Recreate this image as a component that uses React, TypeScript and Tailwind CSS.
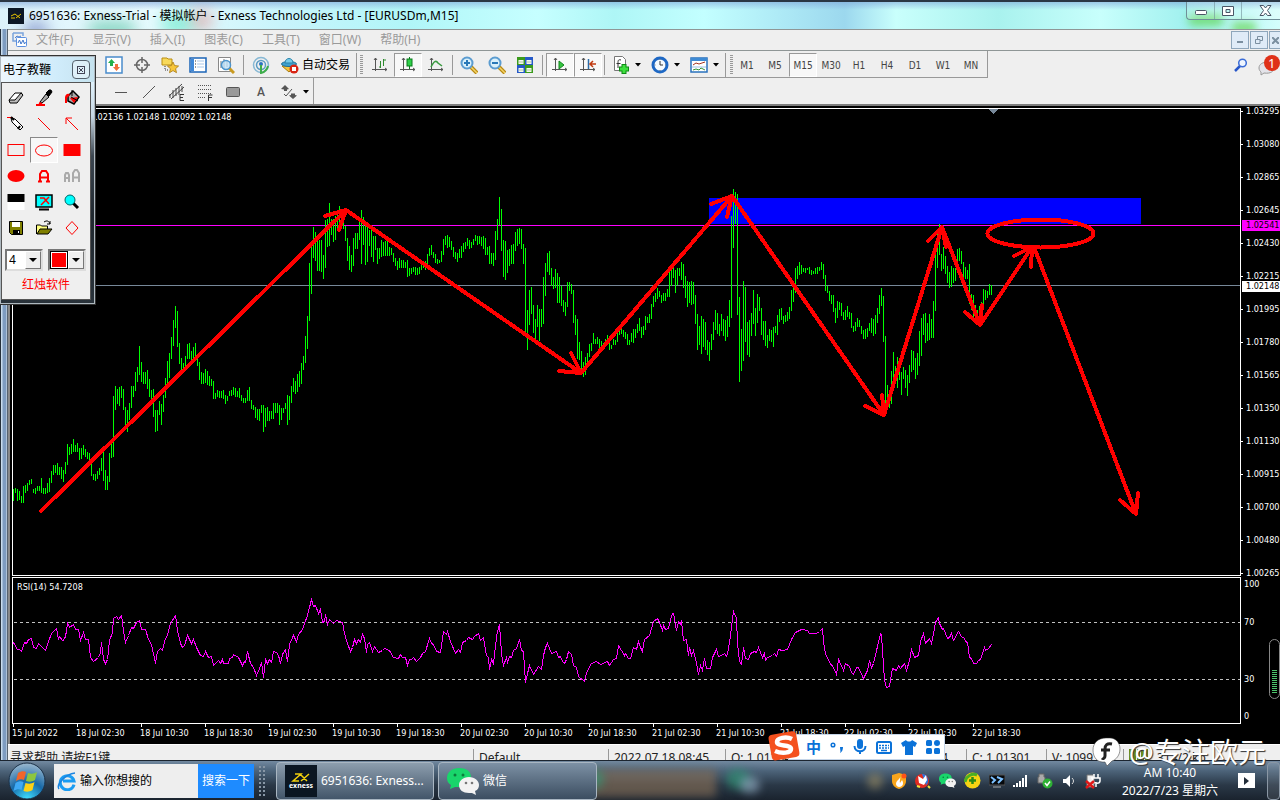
import type { ReactNode } from 'react';

/** high/low of every M15 bar, one bar each 2px starting at x=13 */
const bars = `489-501 488-493 489-501 491-500 496-503 486-503 485-493 483-491 480-485 479-484 489-493 488-494 486-491 486-491 478-493 488-494 488-494 483-493 478-492 471-483
465-475 465-473 463-475 467-475 467-479 470-482 462-474 444-465 447-455 444-454 439-452 445-452 443-452 448-460 448-459 445-455 449-457 452-459 453-465 464-476
474-480 474-481 471-479 468-475 458-471 450-481 470-490 476-490 453-482 444-458 396-457 386-410 389-404 387-406 386-398 389-410 407-425 410-432 403-420 386-408
386-397 372-391 367-382 346-375 362-382 372-384 372-384 370-389 379-397 390-401 389-417 410-432 410-431 401-415 404-425 395-412 378-398 361-386 353-378 337-359
320-346 306-328 311-347 343-364 358-370 363-371 356-371 344-359 343-359 351-362 347-358 343-360 356-366 362-380 372-384 373-384 369-383 371-385 376-386 379-386
381-399 393-399 390-397 391-398 391-398 390-399 395-404 396-401 391-396 390-396 387-395 388-397 391-397 388-398 395-401 398-403 398-403 390-401 387-401 400-409
405-410 407-418 409-420 409-421 405-413 405-432 408-427 407-421 411-421 411-419 403-419 403-413 403-413 405-425 408-420 408-413 403-409 395-425 396-420 386-403
378-392 381-394 374-392 371-387 363-384 356-370 336-363 316-349 263-321 244-294 227-258 232-261 240-271 240-271 240-272 255-279 220-268 219-247 203-246 219-235
219-242 216-240 213-230 206-227 210-223 212-229 226-241 238-261 246-270 255-272 238-266 233-249 233-249 222-240 210-264 217-245 225-265 227-262 230-246 229-257
236-262 236-250 248-264 248-259 240-257 242-256 241-256 241-256 247-256 248-255 253-262 258-266 261-270 258-268 260-268 260-268 262-268 260-277 268-276 268-274
267-272 267-275 268-275 267-274 264-270 264-268 261-270 254-265 248-256 245-255 252-258 254-263 259-264 260-263 251-262 239-255 236-245 235-248 237-247 241-250
247-257 252-259 253-262 249-258 246-258 243-252 242-249 238-246 240-249 242-248 239-245 235-241 236-245 236-244 237-246 236-249 238-255 247-255 246-264 253-264
253-266 231-260 219-240 197-225 209-251 240-277 241-280 250-273 249-266 245-264 244-264 232-251 229-246 228-244 229-249 244-264 248-332 310-350 290-325 287-314
305-333 319-339 305-327 309-341 309-327 277-324 263-296 253-272 251-275 268-286 277-289 269-288 273-303 277-303 286-306 300-312 302-316 282-307 282-291 284-294
290-323 315-335 319-359 342-360 351-371 362-377 357-375 353-363 344-357 343-351 333-344 339-344 337-344 339-349 341-350 343-350 339-347 335-345 340-350 345-349
339-345 340-345 333-342 328-335 327-334 330-337 332-339 334-345 340-345 333-342 329-343 329-338 324-333 318-331 327-338 326-335 316-330 317-323 314-323 304-319
296-307 293-302 288-299 291-297 295-303 293-301 293-301 289-297 270-297 270-286 266-278 270-293 268-285 268-276 262-280 264-288 276-298 281-307 282-303 281-305
282-304 295-324 314-350 326-345 316-354 319-347 322-350 340-355 342-361 334-350 322-340 310-330 313-334 324-336 314-331 319-336 320-341 316-337 300-327 216-318
189-248 192-224 194-315 297-382 329-371 281-361 287-342 322-355 320-357 313-336 290-324 308-336 294-323 297-311 308-335 321-340 321-346 335-348 329-341 330-342
327-347 326-333 315-335 309-322 308-320 316-324 315-322 312-321 307-319 290-311 282-302 268-293 266-279 262-275 265-274 268-272 268-273 268-270 267-274 270-275
271-274 268-274 267-274 267-271 262-270 264-279 275-291 286-293 291-301 295-304 295-312 308-323 301-318 302-310 303-316 312-320 310-320 306-317 312-319 313-328
326-332 322-331 318-327 320-327 326-334 330-339 329-339 328-337 323-331 318-333 319-336 315-334 308-323 295-314 288-306 296-342 336-407 385-410 390-408 371-404
352-378 366-378 357-388 362-380 372-395 367-379 370-388 375-396 365-383 350-372 351-370 358-379 353-375 331-366 318-356 314-335 313-343 323-341 314-340 319-338
301-338 255-311 233-268 224-255 254-271 247-269 256-274 266-283 272-288 266-287 268-283 268-281 249-270 248-261 251-264 262-280 267-279 270-279 264-304 294-310
295-317 305-317 310-318 306-315 302-313 289-307 290-300 291-298 284-295 285-295`
  .split(/\s+/)
  .map((b) => b.split('-').map(Number));

const barPath = bars.map(([hi, lo], i) => `M${13 + i * 2} ${hi}h1V${lo}h-1z`).join('');

const rsi =
  '13,642 17,649 19,649 21,651 24,642 26,643 28,639 31,638 33,647 36,648 38,643 41,646 45,650 48,641 51,633 53,631 56,628 58,639 59,636 62,640 64,639 66,631 67,622 69,627 73,624 75,629 78,629 80,640 83,632 85,639 88,639 90,657 93,661 98,657 100,652 101,642 103,659 105,663 107,659 109,640 112,632 113,618 116,616 118,619 121,615 123,630 125,642 128,635 131,627 133,628 136,622 139,620 141,629 145,629 148,639 151,644 155,663 157,651 160,648 162,650 165,638 167,635 170,623 175,615 177,630 180,643 182,647 184,645 187,635 191,643 193,639 196,647 200,655 203,656 205,651 208,657 211,656 213,665 218,660 220,663 222,659 223,663 228,663 229,658 232,657 233,654 238,657 242,665 244,661 245,662 247,651 250,663 253,667 256,675 259,668 261,662 263,677 265,659 267,663 269,659 271,662 273,651 276,652 278,655 280,663 282,654 285,649 287,661 289,644 293,635 296,641 298,634 302,629 304,623 307,615 309,607 311,599 313,606 315,605 318,613 320,609 322,622 324,621 325,614 327,624 329,619 333,623 336,620 342,622 344,633 347,643 350,651 352,647 354,639 356,643 358,639 360,642 362,634 364,638 366,652 367,644 369,642 372,651 374,646 378,652 382,650 384,648 389,650 393,657 398,658 400,654 402,657 405,657 407,665 409,659 411,659 413,657 416,661 420,657 422,653 425,651 429,638 431,643 433,644 436,651 440,652 443,631 446,634 447,631 450,641 455,653 458,649 460,652 462,642 466,640 468,637 472,639 474,636 478,633 480,640 483,637 486,655 488,657 489,669 491,659 493,663 496,637 497,631 499,624 501,653 503,665 506,657 507,662 509,656 511,657 513,650 516,648 519,639 521,650 523,651 525,682 527,673 529,665 533,674 538,666 541,669 543,655 545,647 547,643 551,653 556,651 558,657 560,656 562,661 564,663 566,659 568,651 571,654 573,665 576,667 578,676 584,681 586,673 588,668 591,663 596,661 600,664 607,661 609,665 613,659 616,658 618,645 621,650 624,655 625,653 628,658 630,658 633,647 636,649 638,641 640,647 642,651 644,639 649,635 653,621 657,618 659,622 662,630 663,625 665,629 668,628 670,619 672,613 673,613 676,630 678,621 680,624 681,620 683,640 686,639 688,655 689,647 691,655 693,650 696,663 698,674 700,665 702,670 704,658 706,668 710,668 712,657 716,649 718,656 721,655 724,653 726,656 727,653 729,642 731,627 732,618 733,611 736,618 737,643 739,661 741,664 743,647 745,658 748,659 750,653 754,651 756,652 758,647 762,657 764,653 765,660 767,657 772,655 774,653 776,656 778,649 782,650 787,649 791,639 795,632 801,629 807,630 809,633 816,633 819,631 822,628 823,641 825,653 829,662 833,667 836,674 838,659 839,661 843,670 845,663 849,666 851,672 853,674 856,667 858,667 863,678 867,670 869,660 871,667 873,663 876,650 877,646 880,633 881,634 882,650 884,680 886,687 889,686 892,668 896,670 898,665 900,668 904,663 906,670 909,660 911,649 914,657 918,655 920,641 923,633 925,643 929,638 931,643 933,633 935,622 938,617 939,623 942,629 943,628 947,638 949,637 951,633 953,640 958,631 961,636 964,638 965,641 967,642 969,657 971,658 973,663 976,663 978,660 980,659 984,647 985,650 988,648 991,644';

/** hand drawn arrows: shaft, then the two strokes of the head */
const arrows = [
  'M41 511L346 210M325 216L346 210L339 230',
  'M346 210L581 373M559 371L581 373L571 353',
  'M581 373L732 196M711 204L732 196L727 217',
  'M732 196L884 415M865 406L884 415L882 395',
  'M884 415L942 227M928 241L942 227L946 247',
  'M942 227L980 325M965 312L980 325L982 305',
  'M980 325L1032 247M1014 256L1032 247L1031 267',
  'M1034 247L1136 514M1120 500L1136 514L1138 493',
];

const prices = [
  '1.03295', '1.03080', '1.02865', '1.02645', '1.02430', '1.02215', '1.01995', '1.01780',
  '1.01565', '1.01350', '1.01130', '1.00915', '1.00700', '1.00480', '1.00265',
];

const times = [
  '15 Jul 2022', '18 Jul 02:30', '18 Jul 10:30', '18 Jul 18:30', '19 Jul 02:30', '19 Jul 10:30', '19 Jul 18:30', '20 Jul 02:30',
  '20 Jul 10:30', '20 Jul 18:30', '21 Jul 02:30', '21 Jul 10:30', '21 Jul 18:30', '22 Jul 02:30', '22 Jul 10:30', '22 Jul 18:30',
];

const menus = ['文件(F)', '显示(V)', '插入(I)', '图表(C)', '工具(T)', '窗口(W)', '帮助(H)'];
const frames = ['M1', 'M5', 'M15', 'M30', 'H1', 'H4', 'D1', 'W1', 'MN'];

const uiFont = "font-['Noto_Sans','Noto_Sans_CJK_SC',sans-serif]";
const tahoma = "font-['DejaVu_Sans_Condensed','DejaVu_Sans',sans-serif]";

function Svg({ size = 18, children }: { size?: number; children: ReactNode }) {
  return (
    <svg width={size} height={size} viewBox="0 0 18 18" fill="none" aria-hidden="true" className="shrink-0">
      {children}
    </svg>
  );
}

function Tool({ label, pressed, children }: { label: string; pressed?: boolean; children: ReactNode }) {
  return (
    <button
      type="button"
      aria-label={label}
      className={`grid h-6 w-7 shrink-0 place-items-center ${
        pressed ? 'border-t border-l border-t-[#999] border-l-[#999] border-r border-b border-r-white border-b-white bg-[#f8f8f8]' : ''
      }`}
    >
      {children}
    </button>
  );
}

const Caret = () => (
  <svg width="6" height="4" viewBox="0 0 6 4" className="shrink-0" aria-hidden="true">
    <path d="M0 0h6L3 3.5z" fill="#000" />
  </svg>
);

const Sep = ({ wide }: { wide?: boolean }) => (
  <span className={`h-5 w-px shrink-0 bg-[#999] ${wide ? 'mx-[3px]' : 'mx-0.5'}`} />
);

const Grip = () => (
  <span className="h-5 w-[3px] shrink-0 bg-[repeating-linear-gradient(#999_0_1px,#efefef_1px_2px)]" />
);

const Axes = () => <path d="M4.500 2v13M1 13.500h15M3 4l1.500-2L6 4M14 12l2 1.500-2 1.500" stroke="#555" />;

const Lens = ({ minus }: { minus?: boolean }) => (
  <Svg>
    <path d="M11 11l6 6" stroke="#b98a12" strokeWidth="4" />
    <path d="M11 11l6 6" stroke="#f4d469" strokeWidth="1.500" />
    <circle cx="7" cy="7" r="5.500" fill="#d9f0fb" stroke="#5b9cd0" strokeWidth="2" />
    <path d={minus ? 'M4 7h6' : 'M4 7h6M7 4v6'} stroke="#2878b8" strokeWidth="2" />
  </Svg>
);

function TitleBar() {
  return (
    <header className="relative flex h-[29px] shrink-0 items-center overflow-hidden border-t-2 border-[#2a3644] bg-[linear-gradient(90deg,#dcf3fb_0%,#e9fbff_12%,#c8f4fb_22%,#b0f6f8_32%,#c6ffff_42%,#aef6f6_48%,#c3ffff_55%,#9cd8ee_66%,#c9fffc_70%,#a9f2ee_78%,#c8fffc_86%,#9ff0ee_93%,#d4fffc_100%)]">
      <span className="absolute inset-x-0 top-0 h-2 bg-linear-to-b from-[#7fa5d8]/60 to-transparent" />
      <span className="absolute top-5 left-6 h-5 w-6 rounded-full bg-[#5560b0]/60 blur-sm" />
      <span className="absolute top-5 left-22 h-4 w-12 rounded-full bg-[#35b890]/60 blur-sm" />
      <span className="absolute top-3 left-40 h-5 w-9 rounded-full bg-[#5fe8c8]/70 blur-sm" />
      <span className="absolute top-2 left-48 h-5 w-5 rounded-full bg-[#e88080]/60 blur-sm" />
      <span className="absolute top-3 right-14 h-3 w-9 rounded-full bg-[#6fdc70]/90 blur-xs" />
      <span className="absolute top-5 right-6 h-3 w-6 rounded bg-[#7fe080] blur-xs" />
      <span className="relative ml-2 grid h-4 w-4 place-items-center bg-[#0c1826]">
        <svg width="12" height="6" viewBox="0 0 12 6" fill="none" aria-hidden="true">
          <path d="M1 5h4M1 3l4-2M5 1l5 4M6 5l5-4" stroke="#e8c400" />
        </svg>
      </span>
      <h1 className="relative ml-[5px] text-[12px] whitespace-nowrap text-black">
        6951636: Exness-Trial - 模拟帐户 - Exness Technologies Ltd - [EURUSDm,M15]
      </h1>
      <div className="relative ml-auto flex h-[18px] self-start rounded-bl border-b border-l border-[#6f8f98] bg-white/20">
        <button type="button" aria-label="最小化" className="grid w-7 place-items-center border-r border-[#6f8f98]/60 pt-1">
          <svg width="12" height="5" viewBox="0 0 12 5" aria-hidden="true"><rect x=".5" y=".5" width="11" height="4" rx="1" fill="#fff" stroke="#4a5566" /></svg>
        </button>
        <button type="button" aria-label="还原" className="grid w-[27px] place-items-center border-r border-[#6f8f98]/60">
          <svg width="12" height="10" viewBox="0 0 12 10" aria-hidden="true">
            <path d="M.5.5h11v9H.500zM4 3.500h4v3H4z" fill="#fff" stroke="#4a5566" fillRule="evenodd" />
          </svg>
        </button>
        <button type="button" aria-label="关闭" className="grid w-[38px] place-items-center pl-2">
          <svg width="13" height="11" viewBox="0 0 13 11" aria-hidden="true">
            <path d="M1 .500h3.500L6.500 3l2-2.500H12L8.500 5.500l3.500 5H8.500l-2-2.500-2 2.500H1l3.500-5z" fill="#fff" stroke="#4a5566" />
          </svg>
        </button>
      </div>
    </header>
  );
}

function MenuBar() {
  return (
    <nav className="flex h-[22px] shrink-0 items-center border-t border-b border-[#8f9696] bg-[#efefef]">
      <svg width="16" height="16" viewBox="0 0 16 16" fill="none" className="ml-1 shrink-0" aria-hidden="true">
        <path d="M1 1h10v3M1 1v8h3" stroke="#7ba4dc" strokeWidth="1.500" />
        <path d="M3 6l2-2 2 1 2-1" stroke="#4a7fd0" />
        <rect x="4.500" y="5.500" width="10" height="9" rx="1" fill="#fff" stroke="#5b8fe0" />
        <path d="M6 11l1.500-3 1.500 4 2-4 1.500 4 1-2" stroke="#3f77cc" />
      </svg>
      <div className="ml-2 flex gap-[19px]">
        {menus.map((m) => (
          <button key={m} type="button" className="text-[12px] whitespace-nowrap text-[#9a9a9a]">
            {m}
          </button>
        ))}
      </div>
      <div className="ml-auto flex gap-px">
        <button type="button" aria-label="最小化图表" className="grid h-[18px] w-[18px] place-items-center border border-[#8ea6bb] bg-[#dfebf7]">
          <span className="mt-1 h-0.5 w-1.5 bg-[#7b8fa0]" />
        </button>
        <button type="button" aria-label="还原图表" className="grid h-[18px] w-[18px] place-items-center border border-[#8ea6bb] bg-[#dfebf7]">
          <svg width="8" height="8" viewBox="0 0 8 8" fill="none" aria-hidden="true"><path d="M2.500 3V.500h5v4H5M.500 3.500H5v4H.500z" stroke="#7b8fa0" /></svg>
        </button>
        <button type="button" aria-label="关闭图表" className="grid h-[18px] w-[11px] place-items-center overflow-hidden border border-r-0 border-[#8ea6bb] bg-[#dfebf7]">
          <svg width="7" height="7" viewBox="0 0 7 7" aria-hidden="true"><path d="M0 0l7 7M7 0L0 7" stroke="#7b8fa0" strokeWidth="2" /></svg>
        </button>
      </div>
    </nav>
  );
}

function MainToolbar() {
  return (
    <div className="flex h-[27px] shrink-0 items-center bg-[#efefef]">
      <div className="flex h-full items-center border-r border-b border-[#999] pt-0.5 pr-0.5 pl-[92px]">
        <Tool label="新图表">
          <Svg>
            <rect x="1" y="1" width="16" height="16" fill="#fff" stroke="#4a8ccc" strokeWidth="1.500" />
            <path d="M6.500 3L10 7H8v3H5V7H3z" fill="#22b14c" />
            <path d="M11.500 15L8 11h2V8h3v3h2z" fill="#f0703c" />
          </Svg>
        </Tool>
        <Tool label="十字准线">
          <Svg>
            <circle cx="9" cy="9" r="5.500" stroke="#666" strokeWidth="1.500" />
            <path d="M9 1v6M9 11v6M1 9h6M11 9h6" stroke="#666" strokeWidth="1.500" />
          </Svg>
        </Tool>
        <Tool label="导航">
          <Svg>
            <path d="M1 2h5l1 1h4v6H1z" fill="#f8d95a" stroke="#b98d10" />
            <path d="M4 10v4h4" stroke="#333" strokeDasharray="1 1" />
            <path d="M12 6l1.600 3.600 4 .4-3 2.700.9 4-3.500-2.100-3.500 2.100.9-4-3-2.700 4-.4z" fill="#f7c63a" stroke="#a87a10" strokeWidth=".8" />
          </Svg>
        </Tool>
        <Tool label="终端">
          <Svg>
            <rect x="1" y="2" width="16" height="14" fill="#fff" stroke="#1d66b8" strokeWidth="1.500" />
            <path d="M2 3h3v12H2z" fill="#3f88d8" />
            <path d="M8 5h7M8 8h7M8 11h7" stroke="#a9c7e8" />
            <path d="M6 5h1M6 8h1M6 11h1" stroke="#333" />
          </Svg>
        </Tool>
        <Tool label="策略测试">
          <Svg>
            <path d="M1.500 1.500h12v14h-12z" fill="#fff" stroke="#888" />
            <path d="M4 12V5M7 13V3M10 11V4" stroke="#777" />
            <path d="M12 12l5 5" stroke="#c99a20" strokeWidth="3" />
            <circle cx="9" cy="9" r="4.500" fill="#bfe1f7" fillOpacity=".8" stroke="#4c94cc" strokeWidth="1.500" />
          </Svg>
        </Tool>
        <Sep wide />
        <Tool label="信号">
          <Svg>
            <circle cx="9" cy="9" r="7.500" stroke="#87b8d4" strokeWidth="1.500" />
            <circle cx="9" cy="9" r="4.500" stroke="#5c9cc4" strokeWidth="1.500" />
            <circle cx="9" cy="8" r="2" fill="#2d73c0" />
            <path d="M9 9v8c4-1 6-3 7-7" stroke="#3fae4a" strokeWidth="2" />
          </Svg>
        </Tool>
        <button type="button" className="flex h-6 w-[81px] shrink-0 items-center gap-[3px] pl-1.5 text-[12px] whitespace-nowrap text-black">
          <Svg>
            <path d="M1 10l7 6 6-6z" fill="#f3c43a" stroke="#a97c12" />
            <ellipse cx="8" cy="8" rx="7.500" ry="2.500" fill="#3ea1cf" stroke="#1f6f98" />
            <path d="M4 7c0-6 8-6 8 0z" fill="#76cbea" stroke="#2a84ab" />
            <circle cx="13" cy="13" r="4.500" fill="#d82414" />
            <rect x="11" y="11" width="4" height="4" fill="#fff" />
          </Svg>
          自动交易
        </button>
        <span className="mr-[3px] h-full w-px bg-[#999]" />
        <Grip />
        <span className="w-[3px]" />
        <Tool label="柱状图">
          <Svg><Axes /><path d="M9.500 5v7M12.500 3v7M8 11h1.500M12.500 4H15" stroke="#2f8a2f" /></Svg>
        </Tool>
        <Tool label="阴阳烛" pressed>
          <Svg><Axes /><path d="M10.500 1v12" stroke="#0a7a1c" /><rect x="8" y="3" width="5" height="7" fill="#2fcf48" stroke="#0a7a1c" /></Svg>
        </Tool>
        <Tool label="折线图">
          <Svg><Axes /><path d="M4 11c3-6 5-7 7-4l4 3" stroke="#3a9a40" strokeWidth="1.500" /></Svg>
        </Tool>
        <Sep />
        <Tool label="放大"><Lens /></Tool>
        <Tool label="缩小"><Lens minus /></Tool>
        <Tool label="平铺窗口">
          <Svg>
            <path d="M1 1h8v8H1zM9 9h8v8H9z" fill="#3a9a1c" />
            <path d="M9 1h8v8H9zM1 9h8v8H1z" fill="#2559c8" />
            <path d="M2.500 4h5v4h-5zM10.500 4h5v4h-5zM2.500 12h5v4h-5zM10.500 12h5v4h-5z" fill="#f4f8ee" />
            <path d="M3 6h4M11 6h4M3 14h4M11 14h4" stroke="#b0c8a0" />
          </Svg>
        </Tool>
        <Sep wide />
        <Tool label="自动滚动" pressed>
          <Svg><Axes /><path d="M8 5l5 4-5 4z" fill="#35c540" stroke="#14851f" /></Svg>
        </Tool>
        <Tool label="图表平移" pressed>
          <Svg><Axes /><path d="M9.500 3v10" stroke="#2b6ca8" strokeWidth="1.500" /><path d="M17 8h-5M14 5l-3 3 3 3" stroke="#c03a10" strokeWidth="1.500" /></Svg>
        </Tool>
        <Sep />
        <Tool label="技术指标">
          <Svg>
            <path d="M2.500.500h8l3 3v11h-11z" fill="#fff" stroke="#777" />
            <path d="M9 4c-3-1-3 1-3 3v5M4.500 7.500h4" stroke="#333" />
            <path d="M12 8v10M7 13h10" stroke="#0c8a14" strokeWidth="5" />
            <path d="M12 9v8M8 13h8" stroke="#3ee03e" strokeWidth="3" />
          </Svg>
        </Tool>
        <Caret />
        <span className="w-[5px]" />
        <Tool label="时间周期">
          <Svg>
            <circle cx="9" cy="9" r="7" fill="#f5fbff" stroke="#1e68c4" strokeWidth="3" />
            <path d="M9 5v4h3" stroke="#333" />
            <path d="M9 3v1M9 14v1M3.500 9h1M14 9h1" stroke="#777" />
          </Svg>
        </Tool>
        <Caret />
        <span className="w-[5px]" />
        <Tool label="模板">
          <Svg>
            <rect x="1" y="2" width="16" height="14" fill="#fff" stroke="#2a72bd" strokeWidth="1.500" />
            <path d="M1 2h16v3H1z" fill="#3d8ad4" />
            <path d="M3 9l3-2 3 1 3-1 3-1" stroke="#a23420" />
            <path d="M2 11h14" stroke="#9cc0e4" />
            <path d="M3 14l3-1 3 1 2-2 4 2" stroke="#33953a" />
          </Svg>
        </Tool>
        <Caret />
        <span className="mr-1 ml-1.5 h-full w-px bg-[#999]" />
        <Grip />
        {frames.map((f) => (
          <button
            key={f}
            type="button"
            className={`h-6 w-7 shrink-0 text-center text-[10px] text-[#444] ${tahoma} ${
              f === 'M15' ? 'border border-t-[#999] border-r-white border-b-white border-l-[#999] bg-[#f8f8f8]' : ''
            }`}
          >
            {f}
          </button>
        ))}
      </div>
      <button type="button" aria-label="搜索" className="ml-auto">
        <svg width="14" height="14" viewBox="0 0 14 14" fill="none" aria-hidden="true">
          <path d="M1 13l5-5" stroke="#2756c8" strokeWidth="2.500" />
          <circle cx="8.500" cy="5" r="3.800" fill="#eef5ff" stroke="#3a6cd6" strokeWidth="1.500" />
        </svg>
      </button>
      <button type="button" aria-label="消息" className="relative ml-2 h-6 w-6 overflow-hidden">
        <svg width="24" height="24" viewBox="0 0 24 24" aria-hidden="true">
          <path d="M12 9c-5 0-9 2-9 6 0 2 1 3 2 4v3l3-2c7 1 10-2 10-5z" fill="#e4e4ea" stroke="#999" />
          <circle cx="16" cy="10" r="8" fill="#df3118" />
        </svg>
        <span className="absolute top-0.5 left-3 text-[13px] leading-4 text-white">1</span>
      </button>
    </div>
  );
}

function LineToolbar() {
  return (
    <div className="flex h-7 shrink-0 border-b-2 border-[#7d7d7d] bg-[#efefef]">
      <div className="flex h-full items-center border-r border-[#999] pt-0.5 pr-1 pl-[99px]">
        <Tool label="水平线"><Svg><path d="M3 9.500h12" stroke="#555" /></Svg></Tool>
        <Tool label="趋势线"><Svg><path d="M3 15L15 3" stroke="#555" /></Svg></Tool>
        <Tool label="等距通道">
          <Svg>
            <path d="M1 13L14 1M3 16L16 4M5 7v8M8 5v8M11 3v9M2 11v4M14 3v6" stroke="#444" />
            <path d="M16 11.500h-4v6h4M12 14.500h3" stroke="#333" />
          </Svg>
        </Tool>
        <Tool label="斐波纳契">
          <Svg>
            <path d="M2 2.500h14M2 6.500h14M2 10.500h14M2 14.500h8" stroke="#555" strokeDasharray="1 1" />
            <path d="M12.500 18v-6h4M12 14.500h4" stroke="#333" />
          </Svg>
        </Tool>
        <Tool label="矩形"><Svg><rect x="2.500" y="4.500" width="13" height="9" rx="1" fill="#999" stroke="#555" /></Svg></Tool>
        <button type="button" aria-label="文字" className="grid h-6 w-7 place-items-center text-[12px] font-medium text-[#555] font-['Roboto',sans-serif]">A</button>
        <Tool label="箭头">
          <Svg>
            <path d="M5 2l4 4-2 .5V8H4V6.500L1 6zM13 16l-4-3.500 2-.5v-1.500h4V12l2 .5z" fill="#555" />
            <path d="M4 11l2 2 6-7" stroke="#555" />
          </Svg>
        </Tool>
        <Caret />
      </div>
    </div>
  );
}

function PriceChart() {
  return (
    <section aria-label="EURUSDm,M15" className="flex min-h-0 flex-1">
      <div className="relative min-w-0 flex-1 border border-white">
        <svg viewBox="13 109 1227 466" preserveAspectRatio="none" className="absolute inset-0 h-full w-full" shapeRendering="crispEdges" aria-hidden="true">
          <rect x="709" y="198" width="432" height="26" fill="#00f" />
          <path d="M13 225h1227v1H13z" fill="#f0f" />
          <path d="M13 285h1227v1H13z" fill="#778899" />
          <path d="M988 109h11l-5.500 5z" fill="#778899" />
          <path d={barPath} fill="#0f0" />
          <g fill="none" stroke="#f00" strokeWidth="4" strokeLinecap="round" strokeLinejoin="round">
            {arrows.map((d) => (
              <path key={d} d={d} />
            ))}
            <ellipse cx="1040.500" cy="233.500" rx="53" ry="14" />
          </g>
        </svg>
        <p className="relative pt-[2px] pl-[82px] text-[9px] leading-3 whitespace-nowrap">.02136 1.02148 1.02092 1.02148</p>
      </div>
      <div className="relative w-[39px] shrink-0">
        <ol className="-my-[3px] flex h-[calc(100%+6px)] flex-col justify-between text-[9px] leading-3">
          {prices.map((p) => (
            <li key={p} className="flex items-center gap-[3px]">
              <span className="h-px w-0.5 bg-white" />
              {p}
            </li>
          ))}
        </ol>
        <span className="absolute top-[24%] right-0 left-px bg-[#f0f] pl-1 text-[9px] leading-[11px] text-black">1.02541</span>
        <span className="absolute top-[37%] right-0 left-px bg-white pl-1 text-[9px] leading-[11px] text-black">1.02148</span>
      </div>
    </section>
  );
}

function RsiChart() {
  return (
    <section aria-label="RSI" className="mt-px flex h-[147px] shrink-0">
      <div className="relative min-w-0 flex-1 border border-white">
        <svg viewBox="13 578 1227 145" preserveAspectRatio="none" className="absolute inset-0 h-full w-full" shapeRendering="crispEdges" aria-hidden="true">
          <path d="M14 622.500h1226M14 679.500h1226" stroke="#c0c0c0" strokeDasharray="3 3" />
          <polyline points={rsi} fill="none" stroke="#f0f" transform="translate(.5 .5)" />
        </svg>
        <p className="relative pt-[3px] pl-1 text-[9px] leading-3">RSI(14) 54.7208</p>
      </div>
      <div className="w-[39px] shrink-0 pt-px pl-[3px] text-[9px] leading-3">
        <p>100</p>
        <p className="mt-[26px]">70</p>
        <p className="mt-[45px]">30</p>
        <p className="mt-[25px]">0</p>
      </div>
    </section>
  );
}

function StatusBar() {
  return (
    <footer className="flex h-4 shrink-0 overflow-hidden border-t border-white bg-[#efefef] pt-1 text-[12px] leading-[17px] whitespace-nowrap text-[#222]">
      <span className="w-[465px] shrink-0 pl-0.5">寻求帮助,请按F1键</span>
      <span className="w-[135px] shrink-0 border-l border-[#999] pl-[5px]">Default</span>
      <span className="w-[117px] shrink-0 border-l border-[#999] pl-[5px]">2022.07.18 08:45</span>
      <span className="w-[160px] shrink-0 border-l border-[#999] pl-[5px]">O: 1.01304</span>
      <span className="w-[81px] shrink-0 border-l border-[#999] pl-[5px]">L: 1.01264</span>
      <span className="w-[80px] shrink-0 border-l border-[#999] pl-[5px]">C: 1.01301</span>
      <span className="w-[77px] shrink-0 border-l border-[#999] pl-[5px]">V: 1099</span>
      <span className="flex border-l border-[#999] pl-[5px]">
        <span className="mr-2 h-3 w-5 bg-[repeating-linear-gradient(90deg,#6b8c1a_0_3px,#efefef_3px_4px)]" />
        314/2 kb
      </span>
    </footer>
  );
}

const paletteTools: { label: string; art: ReactNode }[] = [
  { label: '橡皮', art: <><path d="M2 11l6-7h7l-5 8H3z" fill="#fff" stroke="#000" /><path d="M2 11h6l6-7 2 2-6 8H3z" fill="#bbb" stroke="#000" /></> },
  { label: '荧光笔', art: <><path d="M5 13l6-8 3 3-7 6z" fill="#aaa" stroke="#000" /><path d="M11 4l3-3h2l1 2-3 4z" fill="#000" stroke="#000" /><path d="M1 16h9M4 14l3 1" stroke="red" strokeWidth="2" /></> },
  { label: '填充', art: <><path d="M5 7l5-5 6 6-5 7-6-3z" fill="#aaa" stroke="#000" strokeWidth="1.500" /><path d="M2 14V8c1-4 4-4 5-2L4 9v5z" fill="red" /><path d="M7 9l8-1-4 6z" fill="red" /><path d="M9 7V1M8 8l7 4" stroke="#000" /></> },
  { label: '铅笔', art: <><path d="M0 2.500h6" stroke="red" /><path d="M4 3l4 1 8 8-3 3-8-8z" fill="#fff" stroke="#000" /><path d="M4 2l3 3M13 11l-2 3" stroke="#000" strokeWidth="2" /></> },
  { label: '直线', art: <path d="M3 3l12 12" stroke="red" /> },
  { label: '箭头', art: <path d="M3 3l12 12M3 9V3h6" stroke="red" /> },
  { label: '矩形', art: <rect x="1" y="3.500" width="16" height="11" stroke="red" /> },
  { label: '椭圆', art: <ellipse cx="9" cy="9.500" rx="8.500" ry="5.500" stroke="red" /> },
  { label: '实心矩形', art: <path d="M.5 3h17v12H.500z" fill="red" /> },
  { label: '实心椭圆', art: <ellipse cx="9" cy="9" rx="8.500" ry="6" fill="red" /> },
  { label: '文字', art: <path d="M5 15V7l2-3h4l2 3v8M5 10.500h8M3 14.500h4M11 14.500h4" stroke="red" strokeWidth="2" /> },
  { label: '多行文字', art: <path d="M2 15V8l1-2h2l1 2v7M2 11h4M10 15V6l2-3h2l2 3v9M10 10.500h6" stroke="#aaa" strokeWidth="2" /> },
  { label: '黑板白板', art: <><path d="M.5 1h17v8H.500z" fill="#000" /><path d="M.5 9h17v8H.500z" fill="#fff" /></> },
  { label: '清屏', art: <><path d="M1 2h16v12H1z" fill="#0ff" stroke="#000" strokeWidth="1.500" /><path d="M5 5h4l5 6M14 4l-8 8" stroke="red" strokeWidth="1.500" /><path d="M4 16.500h10" stroke="#000" strokeWidth="2" /></> },
  { label: '放大镜', art: <><path d="M10 10l5 5" stroke="#000" strokeWidth="3" /><circle cx="7" cy="7" r="5" fill="#0ff" stroke="#066" /></> },
  { label: '保存', art: <><path d="M2.500 2.500h13v13h-11l-2-2z" fill="#808000" stroke="#000" /><path d="M5 3h8v5H5z" fill="#fff" /><path d="M6 11h7v4H6z" fill="#000" /><path d="M11 12h1v2h-1z" fill="#fff" /></> },
  { label: '打开', art: <><path d="M1.500 15V6h4l1 1h6v3" fill="#ffff80" stroke="#000" /><path d="M2 15l3-5h12l-4 5z" fill="#808000" stroke="#000" /><path d="M9 3c3-2 5-1 6 2M15 2v3h-3" stroke="#000" /></> },
  { label: '菱形', art: <path d="M9 2.500l6 6.500-6 6.500L3 9z" stroke="red" /> },
];

function Palette() {
  return (
    <aside className="absolute top-[55px] left-0 w-24 border border-l-0 border-[#333] bg-[linear-gradient(#cfe6f5,#dff1fb_26px,#c8d8e4_60px,#3c4650_100px,#20282f_160px,#29323a)] p-px shadow-[inset_0_0_0_1px_#aeb8bf]">
      <div className="flex h-[25px] items-center justify-between bg-[linear-gradient(90deg,#eef7fd,#d0ecfb_60%,#c5e2ee)] pr-1 pl-0.5">
        <h2 className="text-[12px] whitespace-nowrap text-black">电子教鞭</h2>
        <button type="button" aria-label="关闭" className="grid h-[19px] w-[18px] place-items-center rounded-sm border border-[#56626d] bg-white/40">
          <svg width="8" height="8" viewBox="0 0 8 8" fill="none" aria-hidden="true">
            <rect x=".5" y=".5" width="7" height="7" stroke="#445" />
            <path d="M2 2l4 4M6 2L2 6" stroke="#445" />
          </svg>
        </button>
      </div>
      <div className="mr-[3px] mb-[3px] border border-[#555] bg-[#efefef] text-black">
        <div className="mt-0.5 grid w-[84px] grid-cols-3">
          {paletteTools.map((t) => (
            <button
              key={t.label}
              type="button"
              aria-label={t.label}
              className={`grid h-[26px] w-7 place-items-center ${t.label === '椭圆' ? 'border border-t-[#888] border-r-white border-b-white border-l-[#888] bg-[#f7f7f7]' : ''}`}
            >
              <Svg>{t.art}</Svg>
            </button>
          ))}
        </div>
        <div className="mt-2 flex gap-[5px] pl-[3px]">
          <div className="relative">
            <select aria-label="线宽" defaultValue="4" className="block h-[22px] w-[38px] appearance-none border-2 border-t-[#777] border-r-[#ddd] border-b-[#ddd] border-l-[#777] bg-white pl-0.5 text-[12px] leading-4">
              <option>4</option>
            </select>
            <span className="pointer-events-none absolute top-0.5 right-0.5 grid h-[18px] w-4 place-items-center border border-r-[#777] border-b-[#777] border-t-white border-l-white bg-[#efefef]">
              <svg width="8" height="4" viewBox="0 0 8 4" aria-hidden="true"><path d="M0 0h8L4 4z" /></svg>
            </span>
          </div>
          <div className="relative">
            <select aria-label="颜色" defaultValue="red" className="block h-[22px] w-[38px] appearance-none border-2 border-t-[#777] border-r-[#ddd] border-b-[#ddd] border-l-[#777] bg-white">
              <option value="red" aria-label="红" />
            </select>
            <span className="pointer-events-none absolute top-0.5 left-0.5 h-[18px] w-[18px] border border-black bg-[#f00] shadow-[inset_0_0_0_1px_#fff]" />
            <span className="pointer-events-none absolute top-0.5 right-0.5 grid h-[18px] w-4 place-items-center border border-r-[#777] border-b-[#777] border-t-white border-l-white bg-[#efefef]">
              <svg width="8" height="4" viewBox="0 0 8 4" aria-hidden="true"><path d="M0 0h8L4 4z" /></svg>
            </span>
          </div>
        </div>
        <p className="pt-1 pb-1 text-center text-[12px] leading-5 text-[#f00]">红烛软件</p>
      </div>
    </aside>
  );
}

function InputMethodBar() {
  return (
    <div className="absolute bottom-10 left-[788px] flex h-[26px] w-[157px] items-center gap-[9px] border border-[#c5d5e8] bg-white pl-[17px] text-[#0b72d8]">
      <svg width="34" height="32" viewBox="0 0 34 32" className="absolute -top-[5px] -left-[22px]" aria-hidden="true">
        <rect x="3" y="3" width="28" height="26" rx="4" fill="#f4511e" transform="rotate(-10 16 16)" />
        <path d="M25 9c-6-3-15-1-15 3 0 5 14 2 14 7 0 4-9 5-16 2" fill="none" stroke="#fff" strokeWidth="4.500" />
      </svg>
      <button type="button" className="w-[15px] text-[15px] leading-4 font-bold">中</button>
      <button type="button" aria-label="标点">
        <svg width="14" height="14" viewBox="0 0 14 14" fill="none" aria-hidden="true"><circle cx="3" cy="5" r="1.800" stroke="currentColor" strokeWidth="1.500" /><path d="M10 7h3c0 3-1 5-3 6 1-2 0-3 0-6z" fill="currentColor" /></svg>
      </button>
      <button type="button" aria-label="语音">
        <svg width="14" height="16" viewBox="0 0 14 16" fill="none" aria-hidden="true"><rect x="4" y="0" width="6" height="10" rx="3" fill="currentColor" /><path d="M1.500 7c0 7 11 7 11 0M7 12v3" stroke="currentColor" strokeWidth="2" /></svg>
      </button>
      <button type="button" aria-label="软键盘">
        <svg width="16" height="13" viewBox="0 0 16 13" fill="none" aria-hidden="true"><rect x="1" y="1" width="14" height="11" rx="1.500" stroke="currentColor" strokeWidth="2" /><path d="M3 4.500h10M3 7h10" stroke="currentColor" strokeWidth="1.500" strokeDasharray="2 1" /><path d="M5 9.500h6" stroke="currentColor" strokeWidth="1.500" /></svg>
      </button>
      <button type="button" aria-label="皮肤">
        <svg width="16" height="15" viewBox="0 0 16 15" aria-hidden="true"><path d="M5 0c1 2 5 2 6 0l5 3-2 4-2-1v9H4V6L2 7 0 3z" fill="currentColor" /></svg>
      </button>
      <button type="button" aria-label="工具箱">
        <svg width="14" height="14" viewBox="0 0 14 14" fill="currentColor" aria-hidden="true"><rect width="6" height="6" rx="1.500" /><circle cx="11" cy="3" r="3" /><rect y="8" width="6" height="6" rx="1.500" /><rect x="8" y="8" width="6" height="6" rx="1.500" /></svg>
      </button>
    </div>
  );
}

const WeChat = ({ size }: { size: number }) => (
  <svg width={size} height={size} viewBox="0 0 32 32" aria-hidden="true">
    <path d="M12 3C5 3 0 7 0 13c0 3 1 5 4 7l-1 4 5-2h4c7 0 12-4 12-10S19 3 12 3z" fill="#19d66b" />
    <path d="M22 12c-6 0-10 4-10 8 0 5 4 8 10 8h3l4 2-1-4c3-1 4-4 4-6 0-4-4-8-10-8z" fill="#f2f2f2" />
    <circle cx="8" cy="10" r="1.500" fill="#0a7d3c" /><circle cx="16" cy="10" r="1.500" fill="#0a7d3c" />
    <circle cx="19" cy="18" r="1.300" fill="#777" /><circle cx="25" cy="18" r="1.300" fill="#777" />
  </svg>
);

function Tray() {
  return (
    <div className="ml-auto flex items-center">
      <div className="mr-[5px] flex items-center gap-2">
        <span className="h-4 w-4 rounded-full bg-[#9c8d62]/60 blur-xs" />
        <svg width="16" height="16" viewBox="0 0 16 16" aria-hidden="true"><path d="M8 0l7 2v6c0 4-3 7-7 8-4-1-7-4-7-8V2z" fill="#f8a51c" /><path d="M9 3c1 3-4 4-4 8 0 2 2 3 3 3 4 0 5-4 3-7l-2 3c-1-2 1-4 0-7z" fill="#fff" /><circle cx="13" cy="3" r="2.500" fill="#ff5317" /></svg>
        <svg width="16" height="16" viewBox="0 0 16 16" aria-hidden="true"><circle cx="7" cy="8" r="7" fill="#e02a20" /><path d="M7 1c6 0 8 8 4 11z" fill="#2b76e0" /><path d="M3 3l5 3 3-4 1 5-3 5-5-2z" fill="#fff" /><path d="M2 13l3 1M13 13l2 2" stroke="#f4e33a" strokeWidth="2" /></svg>
        <WeChat size={17} />
        <svg width="17" height="17" viewBox="0 0 17 17" aria-hidden="true"><circle cx="8.500" cy="8.500" r="8" fill="#f6d313" /><path d="M1 10C2 4 8 1 13 3" stroke="#4caf22" strokeWidth="3" fill="none" /><path d="M8.500 5v7M5 8.500h7" stroke="#2b8a14" strokeWidth="2.500" /></svg>
        <svg width="16" height="14" viewBox="0 0 16 14" aria-hidden="true"><path d="M0 1h16v10H0z" fill="#05080c" stroke="#555" /><path d="M2 3l4 3-3 3M8 3l5 2-4 4" stroke="#7cc0ff" strokeWidth="2" fill="none" /><path d="M4 13h8" stroke="#aaa" /></svg>
        <svg width="16" height="14" viewBox="0 0 16 14" aria-hidden="true"><path d="M0 11h2v2H0zM3 9h2v4H3zM6 7h2v6H6zM9 4h2v9H9zM12 1h2v12h-2z" fill="#fff" /></svg>
        <svg width="16" height="16" viewBox="0 0 16 16" aria-hidden="true"><path d="M2 1h5v3h1v6H1V4h1z" fill="#aaa" stroke="#666" /><circle cx="10.500" cy="10.500" r="5" fill="#2eb135" /><path d="M8 10l2 2.500 3-4" stroke="#fff" strokeWidth="1.500" fill="none" /></svg>
        <svg width="16" height="14" viewBox="0 0 16 14" aria-hidden="true"><path d="M2 5h3l4-4v12L5 9H2z" fill="#fff" /><path d="M11 4c2 2 2 4 0 6" stroke="#ddd" fill="none" /></svg>
        <svg width="16" height="16" viewBox="0 0 16 16" aria-hidden="true"><path d="M2 2h7v12H2z" fill="#eee" stroke="#777" /><path d="M9 1v4M13 1v4M7 5h8v3c0 3-6 3-7 0zM11 9v5" stroke="#fff" strokeWidth="1.500" fill="none" /><path d="M1 8l8 7M9 8l-8 7" stroke="#e01818" strokeWidth="2.500" /></svg>
      </div>
      <div className="ml-1 w-[120px] self-start pt-[3px] text-center text-[12px] leading-[18px] whitespace-nowrap text-white">
        <p>AM 10:40</p>
        <p>2022/7/23 星期六</p>
      </div>
      <button type="button" aria-label="播放" className="ml-2 grid h-[15px] w-[17px] place-items-center bg-white">
        <svg width="5" height="8" viewBox="0 0 5 8" aria-hidden="true"><path d="M0 0l5 4-5 4z" fill="#222c38" /></svg>
      </button>
      <button type="button" aria-label="显示桌面" className="ml-3 h-[38px] w-[13px] rounded-sm border border-[#8a97a5] bg-white/10" />
    </div>
  );
}

function Taskbar() {
  return (
    <footer className="relative flex h-10 shrink-0 items-center overflow-hidden border-t border-[#1c2530] bg-[linear-gradient(#7289a0_0,#4c6379_10px,#2a3847_24px,#1a232e_100%)]">
      <span className="absolute left-[572px] top-2 h-7 w-36 bg-[#8a6f55]/60 blur-xs" />
      <span className="absolute left-[580px] top-2 h-5 w-6 rounded-full bg-[#2f9a76]/60 blur-xs" />
      <span className="absolute left-[726px] top-2 h-5 w-6 rounded-full bg-[#2f9a76]/60 blur-xs" />
      <span className="absolute left-[740px] top-4 h-4 w-5 rounded-full bg-[#9ab4cc]/60 blur-xs" />
      <button type="button" aria-label="开始" className="relative ml-2">
        <svg width="38" height="38" viewBox="0 0 38 38" aria-hidden="true">
          <defs>
            <radialGradient id="orb" cx=".5" cy="1" r="1">
              <stop offset="0" stopColor="#3fe0ff" />
              <stop offset=".5" stopColor="#1769a8" />
              <stop offset="1" stopColor="#9db9cf" />
            </radialGradient>
          </defs>
          <circle cx="19" cy="19" r="18" fill="url(#orb)" stroke="#1b3148" />
          <path d="M10 11c3-2 6-2 8-1l-2 8c-2-1-5-1-8 1z" fill="#f1652a" />
          <path d="M20 11c3 1 6 1 9-1l-2 8c-3 2-6 2-9 1z" fill="#8cc63f" />
          <path d="M7.500 21c3-2 6-2 8-1l-2 8c-2-1-5-1-8 1z" fill="#3fa9f5" />
          <path d="M17.500 21c3 1 6 1 9-1l-2 8c-3 2-6 2-9 1z" fill="#fcd116" />
        </svg>
      </button>
      <form className="relative ml-2 flex h-[34px]" onSubmit={(e) => e.preventDefault()}>
        <label htmlFor="search" className="grid w-[26px] place-items-center bg-[#eee]">
          <svg width="20" height="20" viewBox="0 0 20 20" fill="none" aria-label="搜索">
            <path d="M17 13.500A7 7 0 1 1 17 10H6" stroke="#1b9cf2" strokeWidth="3" />
            <path d="M2 18C-1 14 8 3 18 2" stroke="#1b84e0" strokeWidth="1.500" />
          </svg>
        </label>
        <input id="search" defaultValue="输入你想搜的" className="w-[118px] bg-[#eee] text-[12px] text-black outline-none" />
        <button type="submit" className="w-14 bg-[#1e8bff] text-[12px] whitespace-nowrap text-white">搜索一下</button>
      </form>
      <span className="relative ml-1 h-8 w-2 bg-[radial-gradient(circle,#8796a5_1px,transparent_1px)] bg-[size:4px_4px]" />
      <button type="button" className="relative ml-[10px] flex h-[38px] w-[158px] items-center gap-1 rounded-sm border border-[#a9b6c2] bg-linear-to-b from-[#8d9eae] to-[#43566a] pl-2 text-[12px] whitespace-nowrap text-white">
        <span className="flex h-8 w-8 shrink-0 flex-col items-center justify-center bg-[#0b1622]">
          <svg width="20" height="9" viewBox="0 0 20 9" fill="none" aria-hidden="true"><path d="M4 1h6L2 8h6M9 1l7 7M10 8l8-7" stroke="#f2d00c" strokeWidth="1.500" /></svg>
          <span className="text-[7px] leading-[7px] font-bold">exness</span>
        </span>
        6951636: Exness...
      </button>
      <button type="button" className="relative ml-1 flex h-[38px] w-[159px] items-center gap-1 rounded-sm border border-[#a9b6c2] bg-linear-to-b from-[#7d91a5] to-[#3c4e61] pl-2 text-[12px] text-white">
        <WeChat size={32} />
        微信
      </button>
      <Tray />
    </footer>
  );
}

export default function App() {
  return (
    <div className={`relative flex h-screen flex-col overflow-hidden bg-black text-white ${uiFont}`}>
      <TitleBar />
      <main className="flex min-h-0 flex-1">
        <div className="w-2 shrink-0 border-r border-[#56626e] bg-[linear-gradient(90deg,#26303a_1px,#c9dced_1px_2px,#7e9cc0_3px_6px,#dfe9f2_7px)]" />
        <div className="flex min-w-0 flex-1 flex-col">
          <MenuBar />
          <MainToolbar />
          <LineToolbar />
          <div className={`flex min-h-0 flex-1 flex-col border-l-2 border-[#8a8a8a] bg-black pt-0.5 pl-0.5 ${tahoma}`}>
            <PriceChart />
            <RsiChart />
            <ol className="flex h-5 shrink-0 overflow-hidden text-[9px] leading-3 whitespace-nowrap">
              {times.map((t) => (
                <li key={t} className="w-16 shrink-0">
                  <span className="ml-px block h-[3px] w-px bg-white" />
                  {t}
                </li>
              ))}
            </ol>
          </div>
          <StatusBar />
        </div>
      </main>
      <Taskbar />
      <Palette />
      <InputMethodBar />
      <div className="absolute right-0 bottom-[101px] flex h-[60px] w-[11px] flex-col justify-end rounded-full border border-[#888] bg-black p-0.5 pb-1">
        <span className="h-6 bg-[repeating-linear-gradient(#4bc46a_0_1px,#000_1px_2px)]" />
      </div>
      <div className="absolute right-[14px] bottom-8 flex items-center gap-2 text-[28px] leading-8 whitespace-nowrap text-white [text-shadow:1px_1px_1px_#333]">
        <svg width="29" height="30" viewBox="0 0 29 30" aria-hidden="true">
          <path d="M14 1h4c6 0 10 5 10 11s-4 11-8 12l-5 5-2-4C5 26 1 20 1 13S6 1 14 1z" fill="#fff" stroke="#333" strokeWidth=".5" />
          <path d="M20 7c-5-1-7 1-7 5v7c0 2-2 3-3 2M9 13h9" fill="none" stroke="#222" strokeWidth="3" />
        </svg>
        @专注欧元
      </div>
    </div>
  );
}
